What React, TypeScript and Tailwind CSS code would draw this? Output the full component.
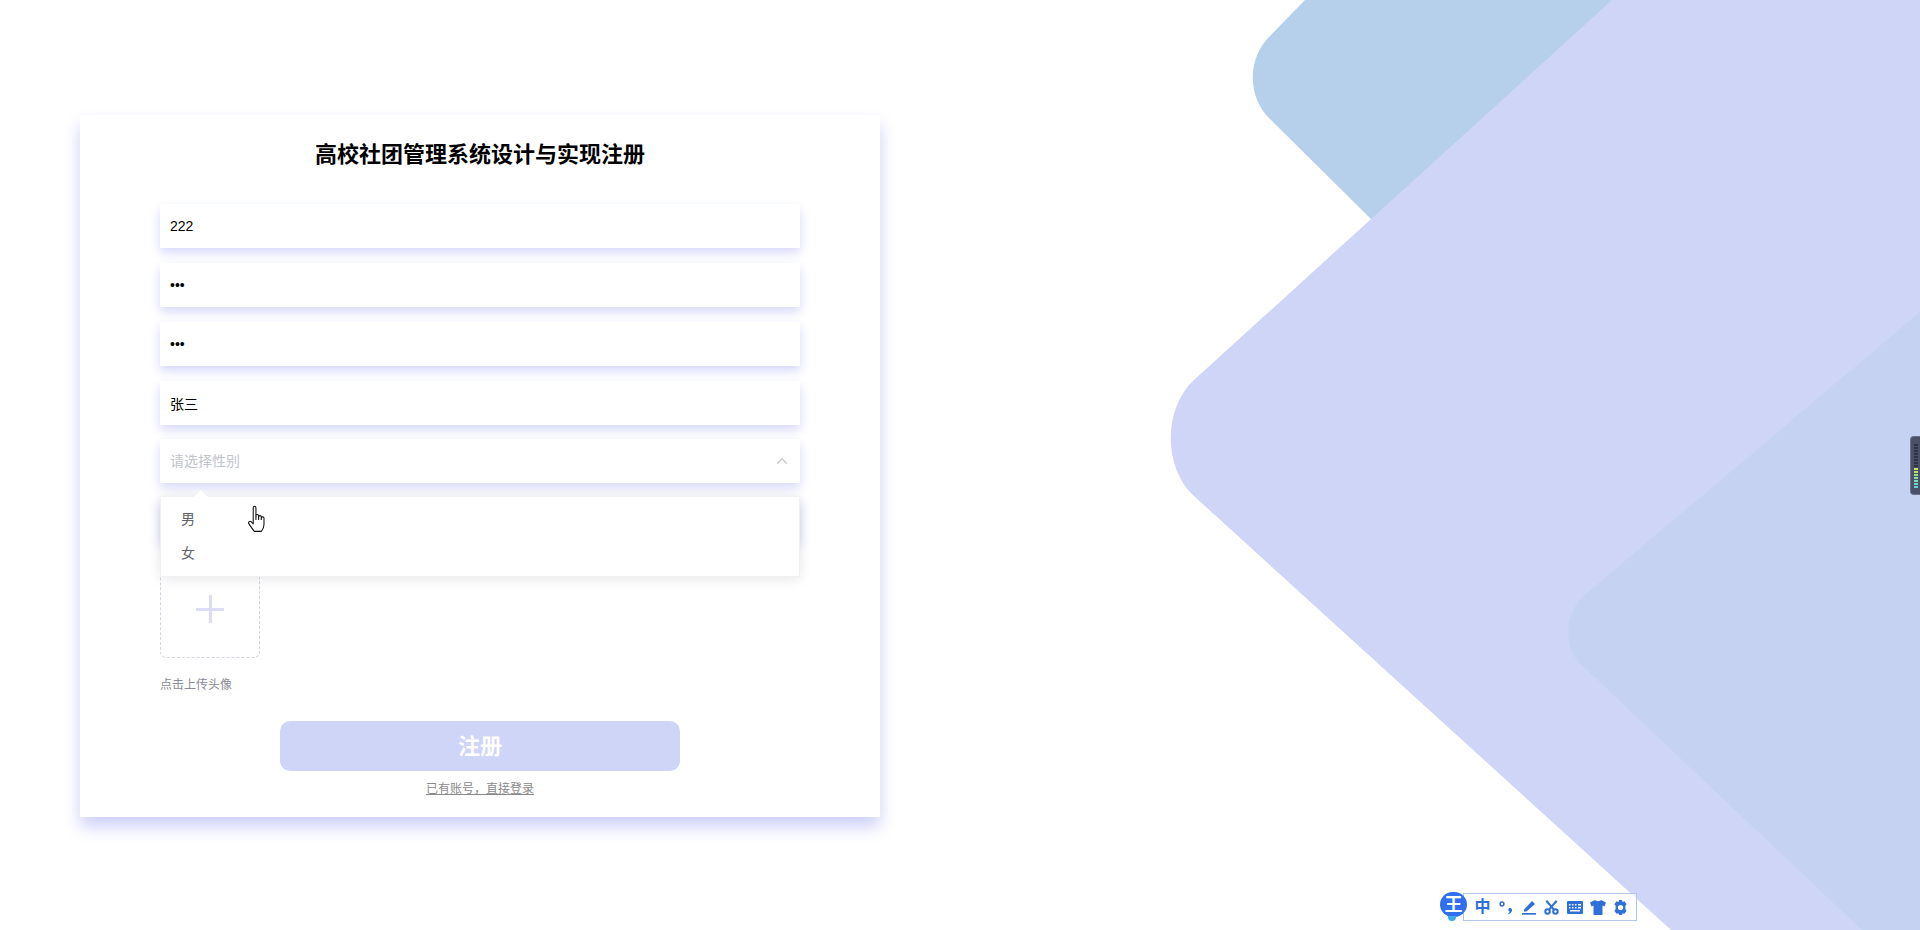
import { ChevronUp } from "lucide-react";

const fontStack = { fontFamily: '"Liberation Sans", "Noto Sans CJK SC", sans-serif' };

const fieldBase = "h-[44px] w-[640px] bg-white px-[10px] text-[14px] outline-none shadow-[0_5px_10px_#d7d9f9]";
const fieldClass = `block text-black ${fieldBase}`;

const meterBars = [
  "#2e3346", "#2e3346", "#2e3346", "#2e3346", "#2e3346", "#2e3346", "#2e3346", "#2e3346",
  "#c9e06a", "#b5e070", "#a0e084", "#8fdf9a", "#7ddcb4", "#6dd8c8", "#62d4d4",
];

function Background() {
  return (
    <svg className="absolute inset-0" width="1920" height="930" viewBox="0 0 1920 930">
      <path d="M1305 0 L1270 36 C1247 58 1247 97 1270 119 L1371 219 L1700 219 L1700 0 Z" fill="#b6cfea" />
      <path
        d="M1612 0 L1194 380 C1163 408 1163 468 1194 496 L1671 930 L1920 930 L1920 0 Z"
        fill="#ced5f6"
      />
      <path
        d="M1920 312 L1587 593 C1562 613 1562 652 1587 670 L1862 930 L1920 930 Z"
        fill="#c5d2f2"
      />
    </svg>
  );
}

function HandCursor() {
  return (
    <svg
      className="absolute left-[86px] top-[8px]"
      width="20"
      height="28"
      viewBox="0 0 18 26"
      fill="white"
      stroke="#111"
      strokeWidth="1"
      strokeLinejoin="round"
    >
      <path d="M5.5 2.5 C5.5 0.8 8 0.8 8 2.5 V10 C8 8.5 10.5 8.5 10.5 10 V11 C10.5 9.5 13 9.5 13 11 V12 C13 10.5 15.5 10.8 15.5 12.3 V18 C15.5 21 14 23 13 24.5 H6.5 C5 22.5 3.5 20.5 1.5 17.5 C0.5 16 2 14.5 3.5 15.5 L5.5 17.5 Z" />
      <path d="M8 10 V14 M10.5 11 V14 M13 12 V14" fill="none" />
    </svg>
  );
}

function ImeBar() {
  return (
    <div className="absolute left-[1440px] top-[893px] flex items-start">
      <div className="relative z-10 mt-[-1px] flex h-[25px] w-[27px] items-center justify-center rounded-[13px] bg-[#2f6ff0] text-[18px] font-bold leading-none text-white">
        王
        <div className="absolute bottom-[-4px] left-[8px] h-[5px] w-[8px] rounded-b-[5px] bg-[#39a9f0]" />
      </div>
      <div className="ml-[-4px] flex h-[28px] w-[174px] items-center border border-[#b4c6e8] bg-white/60 pl-[7px] text-[#2f6fd8]">
        <span className="flex w-[23px] justify-center text-[16px] font-bold leading-none">中</span>
        <span className="flex w-[23px] justify-center">
          <svg width="14" height="15" viewBox="0 0 14 15" fill="currentColor">
            <circle cx="3" cy="4" r="1.9" fill="none" stroke="currentColor" strokeWidth="1.5" />
            <path d="M10 8.2 C12 7.6 13.3 8.8 13 10.6 C12.7 12.4 11.4 13.6 9.6 14.2 L9.2 13.4 C10 12.9 10.6 12.3 10.9 11.6 C9.5 11.4 8.8 9 10 8.2 Z" />
          </svg>
        </span>
        <span className="flex w-[23px] justify-center">
          <svg width="16" height="16" viewBox="0 0 16 16" fill="currentColor">
            <path d="M3 10.5 L11 2 L14 5 L5.5 12.5 L3 12.5 Z" />
            <rect x="1" y="14" width="14" height="1.7" />
          </svg>
        </span>
        <span className="flex w-[23px] justify-center">
          <svg width="15" height="15" viewBox="0 0 16 16" fill="none" stroke="currentColor" strokeWidth="2.2">
            <circle cx="3.8" cy="12.2" r="2.4" />
            <circle cx="12.2" cy="12.2" r="2.4" />
            <path d="M5.4 10.2 L13.5 0.8 M10.6 10.2 L2.5 0.8" />
          </svg>
        </span>
        <span className="flex w-[23px] justify-center">
          <svg width="16" height="13" viewBox="0 0 16 13" fill="currentColor">
            <path
              fillRule="evenodd"
              d="M1 0 H15 A1 1 0 0 1 16 1 V12 A1 1 0 0 1 15 13 H1 A1 1 0 0 1 0 12 V1 A1 1 0 0 1 1 0 Z M2 3 V4.5 H3.5 V3 Z M5 3 V4.5 H6.5 V3 Z M8 3 V4.5 H9.5 V3 Z M11 3 V4.5 H14 V3 Z M2 6 V7.5 H3.5 V6 Z M5 6 V7.5 H6.5 V6 Z M8 6 V7.5 H9.5 V6 Z M11 6 V7.5 H14 V6 Z M3 9 V10.5 H13 V9 Z"
            />
          </svg>
        </span>
        <span className="flex w-[23px] justify-center">
          <svg width="16" height="15" viewBox="0 0 16 15" fill="currentColor">
            <path d="M5 0 C6 1.5 10 1.5 11 0 L16 2.5 L14.5 6.5 L12.5 5.5 V15 H3.5 V5.5 L1.5 6.5 L0 2.5 Z" />
          </svg>
        </span>
        <span className="flex w-[23px] justify-center">
          <svg width="15" height="15" viewBox="0 0 16 16" fill="currentColor">
            <path
              fillRule="evenodd"
              d="M6.5 0 H9.5 L10.2 2 L12.2 1.3 L14.5 4.5 L13.2 6.2 V9.8 L14.5 11.5 L12.2 14.7 L10.2 14 L9.5 16 H6.5 L5.8 14 L3.8 14.7 L1.5 11.5 L2.8 9.8 V6.2 L1.5 4.5 L3.8 1.3 L5.8 2 Z M8 5.2 A2.8 2.8 0 1 0 8 10.8 A2.8 2.8 0 1 0 8 5.2 Z"
            />
          </svg>
        </span>
      </div>
    </div>
  );
}

function SideMeter() {
  return (
    <div className="absolute right-0 top-[436px] flex h-[59px] w-[10px] flex-col items-center justify-center gap-[1px] rounded-l-[4px] border border-r-0 border-[#6b7088] bg-[#4a5068] pl-[1px]">
      {meterBars.map((color, i) => (
        <div key={i} className="h-[2px] w-[4px]" style={{ backgroundColor: color }} />
      ))}
    </div>
  );
}

export default function App() {
  return (
    <div className="relative h-[930px] w-[1920px] overflow-hidden bg-white" style={fontStack}>
      <Background />

      <main className="relative ml-[80px] flex h-[702px] w-[800px] translate-y-[115px] flex-col items-center bg-white pt-[25px] shadow-[0_10px_16px_#cdd0f8]">
        <h1 className="mb-[34px] h-[30px] text-[22px] font-bold leading-[30px] text-black">
          高校社团管理系统设计与实现注册
        </h1>

        <div className="flex flex-col gap-[15px]">
          <input className={fieldClass} readOnly value="222" />
          <input className={fieldClass} readOnly type="password" value="222" />
          <input className={fieldClass} readOnly type="password" value="222" />
          <input className={fieldClass} readOnly value="张三" />

          <div className="relative mt-[-1px]">
            <div className={`${fieldBase} flex items-center justify-between text-[#c0c4cc]`}>
              <span>请选择性别</span>
              <ChevronUp size={18} strokeWidth={1.5} className="mr-[-1px] text-[#c0c4cc]" />
            </div>
            <div className="absolute left-0 top-[57px] z-10 w-[640px] border border-[#f0f1f5] bg-white pb-[6px] pt-[5px] text-[14px] text-[#606266] shadow-[0_2px_12px_rgba(0,0,0,0.1)]">
              <div className="absolute left-[35px] top-[-5px] h-[10px] w-[10px] rotate-45 bg-white" />
              <div className="relative h-[34px] px-[20px] leading-[34px]">男</div>
              <div className="h-[34px] px-[20px] leading-[34px]">女</div>
              <HandCursor />
            </div>
          </div>

          <div className={fieldBase} />
        </div>

        <div className="mt-[16px] w-[640px]">
          <div className="flex h-[100px] w-[100px] items-center justify-center rounded-[6px] border border-dashed border-[#d4d4e4]">
            <div className="relative mt-[2px] h-[28px] w-[28px]">
              <div className="absolute left-0 top-[13px] h-[3px] w-[28px] bg-[#dcdcf4]" />
              <div className="absolute left-[13px] top-0 h-[28px] w-[3px] bg-[#dcdcf4]" />
            </div>
          </div>
          <div className="mt-[17px] h-[20px] text-[12px] leading-[20px] text-[#8a8a96]">点击上传头像</div>
        </div>

        <button className="mt-[26px] h-[50px] w-[400px] rounded-[10px] bg-[#ced5f6] text-[22px] font-bold text-white">
          注册
        </button>
        <a className="mt-[8px] h-[20px] text-[12px] leading-[20px] text-[#8a8a8a] underline">已有账号，直接登录</a>
      </main>

      <ImeBar />
      <SideMeter />
    </div>
  );
}
